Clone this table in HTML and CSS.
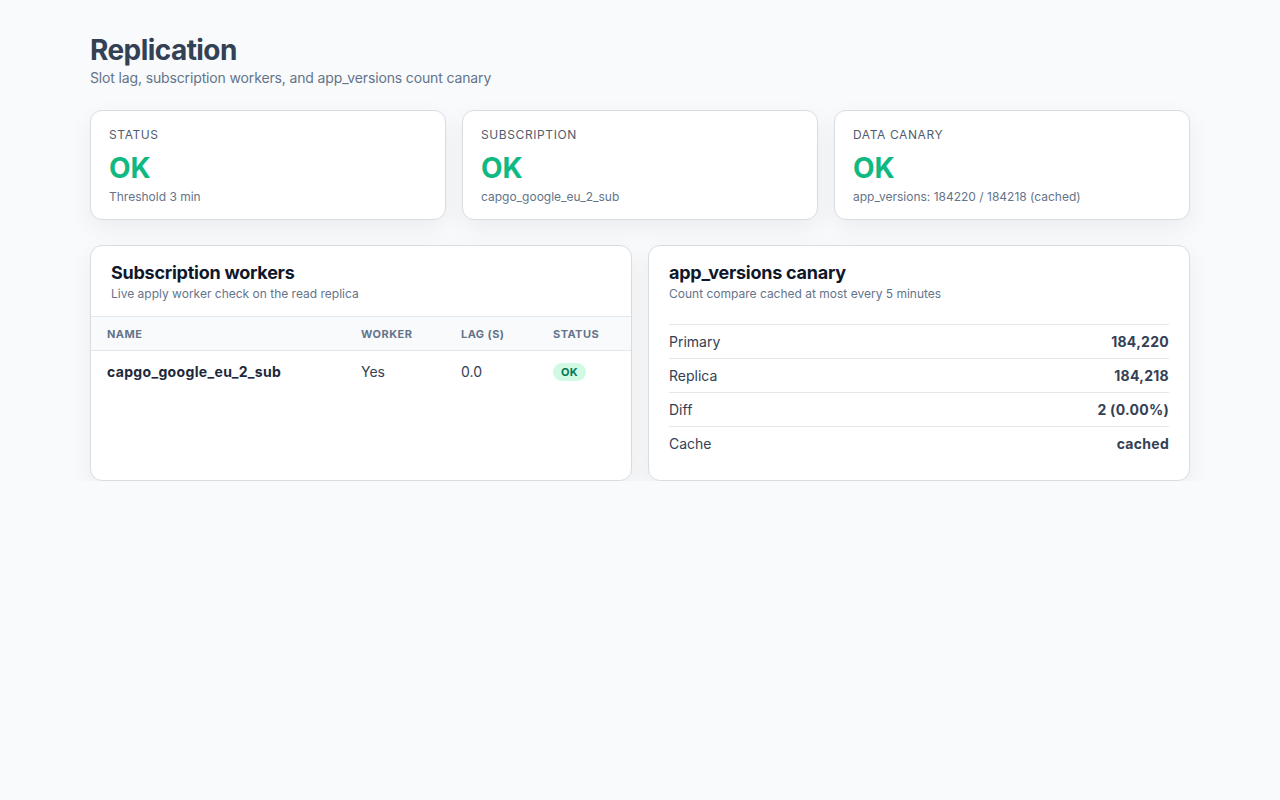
FILE: index.html
```html
<!DOCTYPE html>
<html lang="en">
<head>
<meta charset="utf-8">
<title>Replication</title>
<link rel="stylesheet" href="styles.css">
</head>
<body>
<main class="page">
  <header class="page-head">
    <h1 class="page-title">Replication</h1>
    <p class="page-sub">Slot lag, subscription workers, and app_versions count canary</p>
  </header>

  <section class="stats">
    <div class="card stat">
      <div class="stat-label">Status</div>
      <div class="stat-value">OK</div>
      <div class="stat-note">Threshold 3 min</div>
    </div>
    <div class="card stat">
      <div class="stat-label">Subscription</div>
      <div class="stat-value">OK</div>
      <div class="stat-note">capgo_google_eu_2_sub</div>
    </div>
    <div class="card stat">
      <div class="stat-label">Data canary</div>
      <div class="stat-value">OK</div>
      <div class="stat-note">app_versions: 184220 / 184218 (cached)</div>
    </div>
  </section>

  <section class="panels">
    <div class="card panel panel-table">
      <div class="panel-head">
        <h2 class="panel-title">Subscription workers</h2>
        <p class="panel-sub">Live apply worker check on the read replica</p>
      </div>
      <table class="workers">
        <thead>
          <tr>
            <th class="col-name">Name</th>
            <th class="col-worker">Worker</th>
            <th class="col-lag">Lag (s)</th>
            <th class="col-status">Status</th>
          </tr>
        </thead>
        <tbody>
          <tr>
            <td class="cell-name">capgo_google_eu_2_sub</td>
            <td>Yes</td>
            <td>0.0</td>
            <td><span class="badge">OK</span></td>
          </tr>
        </tbody>
      </table>
    </div>

    <div class="card panel panel-list">
      <div class="panel-head">
        <h2 class="panel-title">app_versions canary</h2>
        <p class="panel-sub">Count compare cached at most every 5 minutes</p>
      </div>
      <dl class="kv">
        <div class="kv-row"><dt>Primary</dt><dd>184,220</dd></div>
        <div class="kv-row"><dt>Replica</dt><dd>184,218</dd></div>
        <div class="kv-row"><dt>Diff</dt><dd>2 (0.00%)</dd></div>
        <div class="kv-row"><dt>Cache</dt><dd>cached</dd></div>
      </dl>
    </div>
  </section>
</main>
</body>
</html>
```

FILE: styles.css
```css
* { box-sizing: border-box; }

html, body {
  margin: 0;
  padding: 0;
  background: #f8fafc;
  font-family: Inter, "Noto Sans", "Liberation Sans", sans-serif;
  color: #334155;
}

.page {
  width: 1100px;
  margin: 0 auto;
  padding-top: 33px;
}

.page-title {
  margin: 0;
  font-size: 28px;
  line-height: 34px;
  font-weight: 700;
  color: #334155;
  letter-spacing: -0.02em;
}

.page-sub {
  margin: 1px 0 0;
  font-size: 14px;
  line-height: 20px;
  color: #64748b;
  letter-spacing: -0.01em;
}

.card {
  background: #ffffff;
  border: 1px solid #d8dde4;
  border-radius: 12px;
  box-shadow: 0 8px 24px rgba(15, 23, 42, 0.06);
}

.stats {
  margin-top: 22px;
  display: grid;
  grid-template-columns: repeat(3, 1fr);
  gap: 16px;
}

.stat {
  padding: 16px 18px 14px;
}

.stat-label {
  font-size: 12px;
  line-height: 16px;
  text-transform: uppercase;
  letter-spacing: 0.05em;
  color: #525c6c;
}

.stat-value {
  margin-top: 8px;
  font-size: 28px;
  line-height: 34px;
  font-weight: 700;
  color: #10b981;
}

.stat-note {
  margin-top: 4px;
  font-size: 12px;
  line-height: 16px;
  color: #64748b;
}

.panels {
  margin-top: 25px;
  display: grid;
  grid-template-columns: 1fr 1fr;
  gap: 16px;
  align-items: stretch;
}

.panel {
  overflow: hidden;
}

.panel-head {
  padding: 15px 20px 0;
}

.panel-title {
  margin: 0;
  font-size: 18px;
  line-height: 24px;
  font-weight: 700;
  color: #0f172a;
  letter-spacing: -0.014em;
}

.panel-sub {
  margin: 1px 0 0;
  font-size: 12px;
  line-height: 16px;
  color: #64748b;
}

.panel-table .panel-head {
  padding-bottom: 14px;
}

.workers {
  width: 100%;
  border-collapse: collapse;
  table-layout: fixed;
}

.workers th {
  background: #f8fafc;
  border-top: 1px solid #e2e8f0;
  border-bottom: 1px solid #e2e8f0;
  padding: 0 16px;
  height: 34px;
  text-align: left;
  font-size: 11px;
  font-weight: 700;
  letter-spacing: 0.04em;
  text-transform: uppercase;
  color: #64748b;
}

.col-worker { width: 100px; }
.col-lag { width: 92px; }
.col-status { width: 94px; }

.workers td {
  padding: 11px 16px 12px;
  font-size: 14px;
  line-height: 18px;
  color: #334155;
}

.workers .cell-name {
  font-weight: 700;
  color: #1e293b;
  letter-spacing: 0.024em;
}

.badge {
  display: inline-block;
  padding: 1px 8px;
  border-radius: 999px;
  background: #d1fae5;
  color: #047857;
  font-size: 11px;
  line-height: 16px;
  font-weight: 700;
  letter-spacing: 0.02em;
}

.panel-list {
  padding-bottom: 20px;
}

.kv {
  margin: 22px 20px 0;
}

.kv-row {
  display: flex;
  justify-content: space-between;
  align-items: center;
  border-top: 1px solid #e5e7eb;
  height: 34px;
  padding-top: 1px;
  font-size: 14px;
  line-height: 18px;
}

.kv dt {
  color: #334155;
}

.kv dd {
  margin: 0;
  font-weight: 700;
  color: #334155;
  letter-spacing: 0.02em;
}
```
